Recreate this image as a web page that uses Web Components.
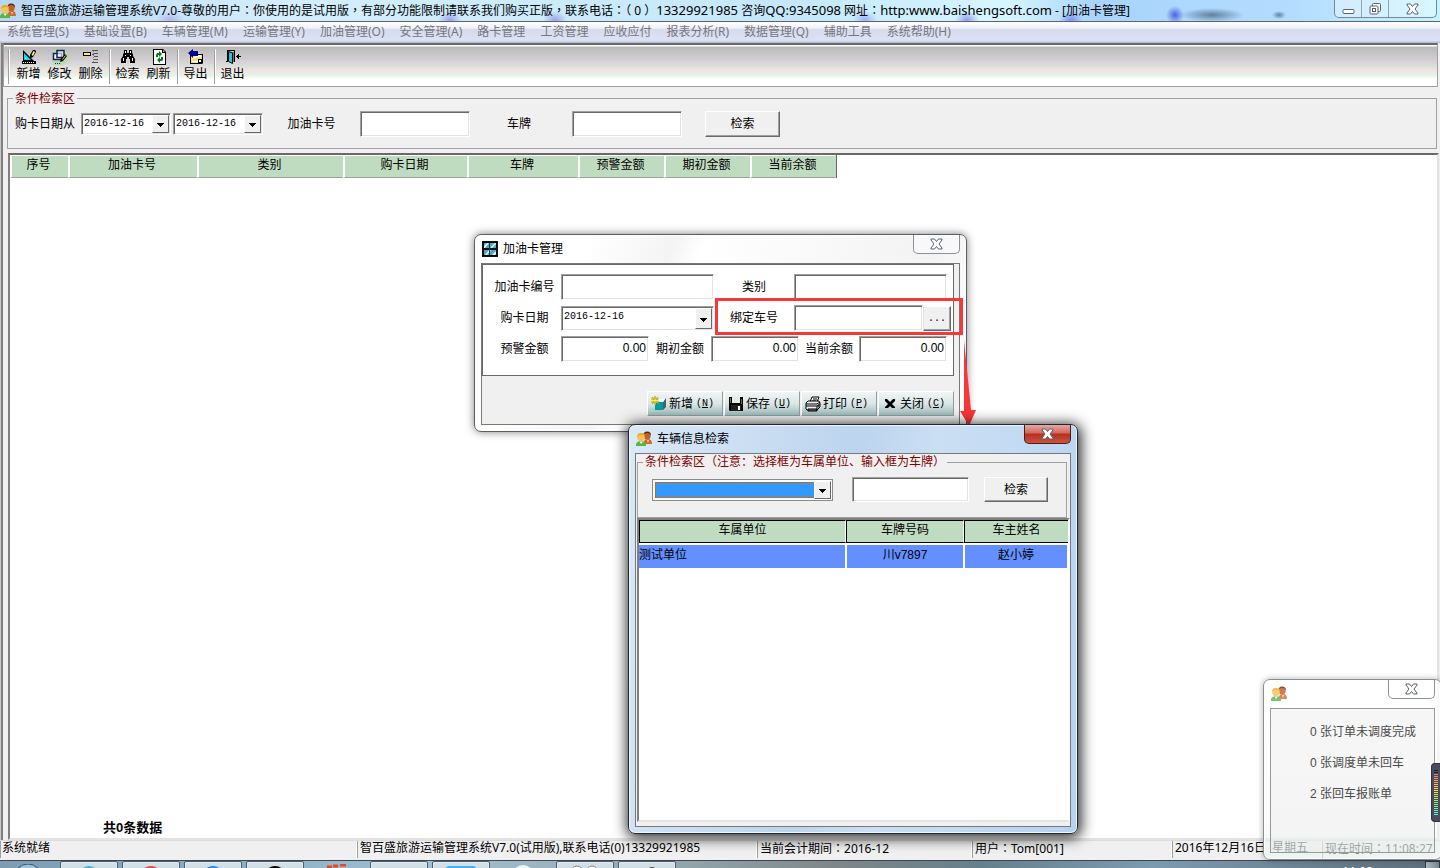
<!DOCTYPE html>
<html lang="zh-CN">
<head>
<meta charset="utf-8">
<title>智百盛旅游运输管理系统</title>
<style>
html,body{margin:0;height:100%;overflow:hidden;background:#fff}
</style>
</head>
<body>
<app-desktop></app-desktop>
<script>
const base = `
*,*::before,*::after{box-sizing:border-box}
:host{display:block;color:#000;font:12px/16px "Noto Sans","Noto Sans CJK SC",sans-serif}
:host([hidden]){display:none}
input,select,button{font:inherit;color:inherit;margin:0;border-radius:0;outline:0}
.mid{font-family:"Noto Sans CJK TC",sans-serif}
`;
/* full-width punctuation is set in the middle of its square */
const mid = text => text.replace(/[：，]/g, c => `<span class="mid" lang="zh-TW">${c}</span>`);

const controls = `
:host{font-family:"Liberation Sans","Noto Sans CJK SC",sans-serif}
input{height:26px;min-width:0;padding:0 2px;background:#fff;border:1px solid;border-color:#a0a0a0 #fff #fff #a0a0a0;
 box-shadow:inset 1px 1px #696969,inset -1px -1px #e3e3e3}
label{text-align:center;white-space:nowrap;flex:none}
.combo{position:relative;display:block;height:22px;flex:none}
.combo select{appearance:none;width:100%;height:100%;padding:0 2px;background:#fff;border:1px solid;border-color:#a0a0a0 #fff #fff #a0a0a0;
 box-shadow:inset 1px 1px #696969,inset -1px -1px #e3e3e3;font:10px/16px "Liberation Mono",monospace}
.combo svg{position:absolute;right:2px;top:2px;bottom:2px;width:17px;height:calc(100% - 4px);background:#f0f0f0;border:1px solid;
 border-color:#fff #696969 #696969 #fff;pointer-events:none}
.push{background:#f0f0f0;border:1px solid;border-color:#fff #696969 #696969 #fff;box-shadow:inset -1px -1px #a0a0a0;height:26px;padding:0;flex:none}
fieldset{border:1px solid #a0a0a0;margin:0;padding:0;min-width:0}
legend{color:#800000;padding:0 2px;margin-left:5px;line-height:16px}
.row{display:flex;align-items:center}
`;
const arrow = `<svg viewBox="0 0 15 16" shape-rendering="crispEdges" aria-hidden="true"><path d="M4 7h7v1h-1v1h-1v1h-1v1h-1v-1h-1v-1h-1v-1h-1z"/></svg>`;

function define(name, css, html){
  customElements.define(name, class extends HTMLElement{
    constructor(){
      super();
      this.attachShadow({mode:'open'}).innerHTML = `<style>${base}${css}</style>${html}`;
    }
  });
}

const icons = {
  users:`<g><circle cx="11" cy="5" r="3.6" fill="#c0602c"/><path d="M7.500 4q0-3.500 3.500-3.500 4.500 0 4 4.500-1-3-4-3-2 0-3.500 2z" fill="#5b2a14"/><path d="M8 12v-2q1-2 4-2 4 0 4 5H8z" fill="#d9652b"/><circle cx="5" cy="6.500" r="3.800" fill="#f6c350"/><path d="M1 6q0-4 4-4 4 0 4 3-2-1-4-1-3 0-4 2z" fill="#eba52a"/><path d="M0 15v-2q1-3 5-3 4 0 5 3v2z" fill="#55b64a"/><path d="M3.500 10.500 5 13l2-2.500z" fill="#fff"/><path d="M11 9h2l-1 3z" fill="#f5ddb0"/></g>`,
  add:`<path d="M2 1l11 11H2z" fill="#000"/><path d="M3 4l7 7H3z" fill="#00e0e8"/><path d="M4 8l2 2H4z" fill="#fff"/><path d="M1 12h14v3H1z"/><path d="M2 13h1v1H2zM4 13h1v1H4zM6 13h1v1H6zM8 13h1v1H8zM10 13h1v1h-1zM12 13h1v1h-1z" fill="#fff"/><path d="M9 9V6l3-5h2l1 1v1l-3 5-2 1z"/><path d="M10.500 6l2-4 1.500 1-2 4z" fill="#ffe98a"/>`,
  edit:`<path d="M0 3q2-3 7-3 5-1 8 3l1 6q-1 6-6 7H2q-3-4-2-13z" fill="#b5dcb0"/><path d="M1.500 4.500h8v6h-8z" fill="#fff" stroke="#181860" stroke-width="1.500"/><path d="M5 1.500h7v7H5z" fill="#fff" fill-opacity=".6" stroke="#181860" stroke-width="1.500"/><path d="M8 13l1-3 4-5 2 2-4 5z"/><path d="M10.500 10.500l3-4" stroke="#ffd54a"/><path d="M3 14.500h1m1 0h1m1 0h1" stroke="#333"/>`,
  del:`<path d="M0 3h8v4H0z"/><path d="M1 4h6v2H1z" fill="#ffe96a"/><path d="M9 1h6v1H9zM11 4h4v1h-4zM9 5h2v1H9zM11 7h4v1h-4zM11 10h4v1h-4zM9 13h6v1H9z" fill="#555"/><path d="M10.500 2v11" stroke="#888" stroke-dasharray="1 1"/>`,
  find:`<path d="M4 1h3v3h2V1h3v3l1 1v2l2 3v4h-5v-4H9V8H7v2H6v4H1v-4l2-3V5l1-1z"/><path d="M5 2h1v2H5zM10 2h1v2h-1zM3 9h1v3H3zM12 9h1v3h-1zM5 6h1v1H5zM10 6h1v1h-1z" fill="#fff"/>`,
  refresh:`<path d="M2 0h10l3 3v13H2z"/><path d="M3 1h8v3h3v11H3z" fill="#fff"/><path d="M12 1v2h2z" fill="#aaa"/><path d="M5 8V6l1-2h2V2l3 3-3 3V6H7v2zM12 8v3l-1 1H9v2l-3-3 3-3v2h1V8z" fill="#087a18"/>`,
  export:`<path d="M2 5h13v9l-1 1H2z"/><path d="M3 6h11v8H3z" fill="#f4e67d"/><path d="M4 8h4v1H4zM8 6h5v2H8zM4 12h6v1H4z" fill="#fff"/><path d="M10 10h4v4h-4z"/><path d="M11 11h2v2h-2z" fill="#fff"/><path d="M0 4l5-4v2h5v5H5v2z" fill="#00008c"/>`,
  exit:`<path d="M2 1h8v12H9V2H3v11H1v-1h1z"/><path d="M7 3h2v10H7z" fill="#777"/><path d="M3.500 2.500l4 1.500v10.500l-4-2z" fill="#27c9d4" stroke="#000"/><path d="M11 7h5v1h-5zM12 6h1v3h-1zM13 5h1v5h-1z"/>`,
  film:`<path d="M0 0h16v16H0z" fill="#111"/><path d="M2 2h12v5H2zM2 9h12v5H2z" fill="#55a6c0"/><path d="M2 5l3-3h2L3 7H2zM9 6l4-4h1v1l-4 4H9zM3 14l4-5h2l-4 5zM10 14l4-4v3l-1 1z" fill="#dff5ff"/><path d="M0 1h16v1H0zM0 14h16v1H0z"/><path d="M7 2h1v12H7z" fill="#18384a"/>`,
  spark:`<path d="M4 6h8v8H4z" fill="#009c9c"/><path d="M12 6l3-4v9l-3 3z" fill="#426070"/><path d="M6 5l2-2h6l-2 3z" fill="#fff"/><path d="M4 0v9M0 4.500h8M1 1.500l6 6M7 1.500l-6 6" stroke="#857c00" stroke-width="1.600"/><path d="M4 0v9M0 4.500h8M1 1.500l6 6M7 1.500l-6 6" stroke="#fff04a"/>`,
  save:`<path d="M1 1h14v14H2l-1-1z"/><path d="M4 1h8v6H4z" fill="#e3eaea"/><path d="M3 9h10v6H3z" fill="#202020"/><path d="M2 2h1v5H2zM13 3h1v5h-1z" fill="#777728"/><path d="M10 10h2v4h-2z" fill="#fff"/>`,
  print:`<path d="M5 6l2-5h7l-2 5z" fill="#fff" stroke="#000"/><path d="M8 3h4M7 5h4" stroke="#000"/><path d="M1 7l2-2h11l1 2v4l-3 3H2l-1-1z" fill="#eee" stroke="#000"/><path d="M1 8h11l3-2M1 10h11v4M12 10l3-2M3 13h9v2H3z" fill="none" stroke="#000"/><path d="M13 9v3l2-2V7z" fill="#333"/>`,
  cross:`<path d="M3 3h2l3 3 3-3h2v2l-3 3 3 3v1h-3L8 10l-2 2H3v-1l3-3-3-3z"/>`
};
customElements.define('pixel-icon', class extends HTMLElement{
  constructor(){
    super();
    this.attachShadow({mode:'open'}).innerHTML =
      `<style>:host{display:block;width:16px;height:16px;flex:none}svg{display:block}</style>
       <svg width="16" height="16" viewBox="0 0 16 16" aria-hidden="true">${icons[this.getAttribute('name')]||''}</svg>`;
  }
});

const xGlyph = `<svg width="13" height="12" viewBox="0 0 13 12" aria-hidden="true"><path d="M1 1h3.500l2 2.500 2-2.500H12v1L9 6l3 4v1H8.500l-2-2.500-2 2.500H1v-1l3-4-3-4z" fill="#fff" stroke="#596070"/></svg>`;

define('title-bar', `
:host{height:22px;border-bottom:1px solid #596470;overflow:hidden;
 background:
  radial-gradient(ellipse 14px 9px at 70px 20px,#c0c6ee,transparent),
  radial-gradient(ellipse 14px 9px at 170px 20px,#b0b8ee,transparent),
  radial-gradient(ellipse 12px 9px at 450px 20px,#9aa2ee,transparent),
  radial-gradient(ellipse 12px 9px at 555px 20px,#9aa2ee,transparent),
  radial-gradient(ellipse 12px 9px at 865px 20px,#9fb0f5,transparent),
  radial-gradient(ellipse 12px 9px at 967px 20px,#8f9cf0,transparent),
  radial-gradient(ellipse 12px 9px at 1071px 20px,#7d90f0,transparent),
  radial-gradient(ellipse 9px 9px at 1175px 15px,#4c63e0,transparent),
  radial-gradient(ellipse 32px 7px at 1212px 15px,#60809c,transparent),
  radial-gradient(ellipse 7px 4px at 1279px 15px,#60809c,transparent),
  linear-gradient(90deg,#b9d6f0,#d4eefc 20%,#c4e8fa 55%,#d6f6ff 70%,#a8d4fb 76%,#b4dcff 90%,#c6f4ff)}
.bar{display:flex;justify-content:space-between}
.name{display:flex;align-items:center;gap:5px;height:21px;white-space:nowrap}
h1{margin:0;font:inherit}
.num{font-size:13px}
.btns{display:flex;height:18px;margin-right:3px;border:1px solid #74899c;border-top:0;border-radius:0 0 5px 5px;overflow:hidden;background:rgba(255,255,255,.35)}
button{display:grid;place-items:center;width:27px;border:0;border-right:1px solid #8fa5b5;background:none;padding:0}
button:last-child{width:47px;border:0}
`, `<div class="bar"><div class="name"><pixel-icon name="users"></pixel-icon><h1>${mid('智百盛旅游运输管理系统V7.0-尊敬的用户：你使用的是试用版，有部分功能限制请联系我们购买正版，联系电话：')}（ 0 ）<span class="num">13329921985</span> 咨询<span class="num">QQ:9345098</span> ${mid('网址：')}<span class="num">http:www.baishengsoft.com</span> - [加油卡管理]</h1></div>
<div class="btns"><button aria-label="最小化"><svg width="13" height="12" viewBox="0 0 13 12"><rect x="1" y="6.500" width="11" height="4" rx="1" fill="#fff" stroke="#596070"/></svg></button><button aria-label="还原"><svg width="13" height="12" viewBox="0 0 13 12" fill="#fff" stroke="#596070"><rect x="3.500" y=".5" width="8" height="8" rx="1"/><rect x="1" y="3" width="8" height="8" rx="1"/><rect x="3.500" y="5.500" width="3" height="3"/></svg></button><button aria-label="关闭">${xGlyph}</button></div></div>`);

define('menu-bar', `
:host{height:21px;background:linear-gradient(#fff,#eef0f8 30%,#d5dcee 35%,#dde2f4 90%,#b8c0d4 96%)}
nav{display:flex;gap:15px;padding:2px 7px 0;white-space:nowrap}
a{color:#76767c;text-decoration:none}
`, `<nav>${['系统管理(S)','基础设置(B)','车辆管理(M)','运输管理(Y)','加油管理(O)','安全管理(A)','路卡管理','工资管理','应收应付','报表分析(R)','数据管理(Q)','辅助工具','系统帮助(H)'].map(t=>`<a href="#">${t}</a>`).join('')}</nav>`);

define('tool-button', `
:host{width:31px;font-family:"Noto Sans CJK SC",sans-serif}
button{display:flex;flex-direction:column;align-items:center;width:100%;padding:0;border:0;background:none;white-space:nowrap}
`, `<button><slot name="icon"></slot><slot></slot></button>`);

define('tool-bar', `
:host{height:44px;margin-right:1px;border:1px solid #a0a0a0;border-top:2px solid #696969;
 background:linear-gradient(#fff 0 1px,#bababa 2px,#c8c8c8 10px,#d4ccd4 15px,#d8dcd8 20px,#eee4e4 25px,#e8f4e8 31px,#fff 34px)}
div{display:flex;height:100%;padding:4px 4px 2px}
i{width:6px;padding-right:1px}
i::before{content:"";display:block;height:100%;margin-right:1px;border-right:1px solid #a0a0a0;box-shadow:1px 0 #fff}
i:first-child{width:3px;margin-right:2px}
`, `<div role="toolbar"><i></i>${[['add','新增'],['edit','修改'],['del','删除'],0,['find','检索'],['refresh','刷新'],0,['export','导出'],0,['exit','退出']].map(b=>b?`<tool-button><pixel-icon slot="icon" name="${b[0]}"></pixel-icon>${b[1]}</tool-button>`:'<i></i>').join('')}</div>`);

define('card-search', controls+`
:host{padding:2px 2px 4px 4px;background:#f0f0f0}
legend{padding-top:2px}
.row{height:47px;padding:0 7px 2px;margin-top:-6px}
.row label:first-child{width:66px;text-align:left}
.combo{width:90px;margin-right:2px}
.combo+.combo{margin-right:0}
.wide{width:97px}.plate{width:102px;padding-right:4px}
input{width:110px}
.push{width:75px;margin-left:23px}
`, `<fieldset><legend>条件检索区</legend><div class="row">
<label for="from">购卡日期从</label><span class="combo"><select id="from"><option>2016-12-16</option></select>${arrow}</span><span class="combo"><select aria-label="购卡日期到"><option>2016-12-16</option></select>${arrow}</span>
<label class="wide" for="card">加油卡号</label><input id="card"><label class="plate" for="plate">车牌</label><input id="plate"><button class="push">检索</button></div></fieldset>`);

define('card-table', `
:host{flex:1;min-height:0;margin-left:5px;border:2px solid;border-color:#696969 #e3e3e3 #e3e3e3 #808080;background:#fff;font-family:"Liberation Sans","Noto Sans CJK SC",sans-serif}
.in{display:flex;flex-direction:column;justify-content:space-between;height:100%}
table{border-collapse:separate;border-spacing:0;table-layout:fixed;width:827px;border-right:1px solid #696969}
th{height:23px;padding:0 2px 4px 0;font-weight:400;background:#c0dcc0;border:1px solid;border-color:#fff #c0dcc0 #a0a0a0 #fff;border-left-width:2px}
p{margin:0;padding:0 0 2px 93px;font-size:13px;font-weight:700}
`, `<div class="in"><table><colgroup><col style="width:58px"><col style="width:129px"><col style="width:146px"><col style="width:124px"><col style="width:111px"><col style="width:86px"><col style="width:86px"><col style="width:86px"></colgroup><thead><tr>${['序号','加油卡号','类别','购卡日期','车牌','预警金额','期初金额','当前余额'].map(t=>`<th scope="col">${t}</th>`).join('')}</tr></thead></table><p>共0条数据</p></div>`);

define('status-bar', `
:host{height:20px;background:#f0f0f0;border-top:1px solid #dcdcdc}
div{display:grid;grid-template-columns:357fr 400fr 215fr 200fr 150fr 118fr;height:17px}
span{line-height:14px}
div>span{border-left:1px solid #a0a0a0;padding-left:2px;white-space:nowrap;min-width:0;box-shadow:-1px 0 #fff}
div>span:first-child{padding-left:1px}
`, `<div><span>系统就绪</span><span>智百盛旅游运输管理系统V7.0(试用版),联系电话(0)13329921985</span><span>${mid('当前会计期间：')}2016-12</span><span>${mid('用户：')}Tom[001]</span><span>2016年12月16日&ensp;星期五</span><span>${mid('现在时间：')}11:08:27</span></div>`);

define('task-bar', `
:host{height:8px;overflow:hidden;border-top:1px solid #3d4650;background:linear-gradient(90deg,#7d9cb2,#8fb3c8 20%,#a4c0d0 30%,#90a4aa 48%,#7e8688 58%,#65808c 68%,#7c9ab0 80%,#5c6e7a)}
div{display:flex;height:30px;gap:4px}
i{flex:none;width:58px;border:1px solid #4a6070;border-radius:2px;background:linear-gradient(#d6e2e8,#b4c8d4);box-shadow:inset 0 0 0 1px #dfeaf0}
i svg{display:block;margin:3px auto 0}
i.orb{width:56px;background:none;border:0;box-shadow:none}
i.flat{background:none;border:0;box-shadow:none}
time{margin:3px 48px 0 auto;color:#fff;line-height:16px}
b{width:15px;border:1px solid #2f3c46;background:linear-gradient(90deg,#b0bcc4,#77868f)}
`, `<div><i class="orb"><svg width="34" height="26"><circle cx="17" cy="14" r="14" fill="#a5c0cf" stroke="#235d88"/></svg></i>${['#45b8e0','#dc4a3a','#1c8cf0','#000'].map(c=>`<i><svg width="24" height="20"><circle cx="12" cy="12" r="11" fill="${c}"/></svg></i>`).join('')}<i class="flat"><svg width="24" height="20"><path d="M2 3h5m1-1h5m2-1h6" stroke="#e84a1c" stroke-width="3"/></svg></i><i><svg width="20" height="20"><path d="M2 4h14v12H2z" fill="#c8a970"/></svg></i><i><svg width="32" height="20"><rect x="1" y="1" width="30" height="19" rx="3" fill="#3cb4f4"/></svg></i><i class="flat"><svg width="24" height="20"><circle cx="12" cy="12" r="11" fill="#e9f6fc"/></svg></i><i><svg width="32" height="20" fill="#fff" stroke="#888"><circle cx="8" cy="7" r="6"/><circle cx="23" cy="7" r="6"/></svg></i><i><svg width="24" height="20"><circle cx="17" cy="8" r="6" fill="#555"/></svg></i><time>11:08</time><b></b></div>`);

define('glass-window', `
:host{position:absolute;display:flex;flex-direction:column;padding:0 6px 6px;border:1px solid #555d66;border-radius:7px;
 background:linear-gradient(115deg,#fff 0 20%,#f4f4f4 35%,#fff 40%,#f3f3f3 80%,#fff);box-shadow:inset 0 0 0 1px #fff,0 0 9px rgba(0,0,0,.5)}
:host([tone=blue]){border-color:#20262e;background:linear-gradient(100deg,#dbe9f7,#bcd4ee 45%,#cbdff3 60%,#b4d2f2);box-shadow:inset 0 0 0 1px #eef8ff,1px 2px 14px 2px rgba(0,0,0,.85)}
:host([tone=ghost]){border-color:#8a8e92;background:linear-gradient(rgba(255,255,255,.85),rgba(248,248,248,.5) 80%,rgba(230,250,245,.5));box-shadow:inset 0 0 0 1px #fff,0 0 6px rgba(0,0,0,.3)}
header{display:flex;justify-content:space-between;height:28px;flex:none}
.name{display:flex;align-items:center;gap:5px;padding-left:1px;white-space:nowrap}
:host([tone=ghost]) .name{opacity:.8}
h2{margin:0;font:inherit}
button{display:grid;place-items:center;width:47px;height:19px;padding:0;border:1px solid #8b9199;border-top:0;border-radius:0 0 5px 5px;background:rgba(255,255,255,.4)}
:host([tone=blue]) button{border-color:#4d1b18;background:linear-gradient(#e6a79e,#d0685a 45%,#b52f20 50%,#c9543e)}
main{flex:1;min-height:0;border:1px solid #787878;background:#f0f0f0}
:host([tone=ghost]) main{border-color:#999;background:rgba(232,232,232,.35)}
`, `<header><div class="name"><slot name="icon"></slot><h2><slot name="title"></slot></h2></div><button aria-label="关闭">${xGlyph}</button></header><main><slot></slot></main>`);

define('card-form', controls+`
:host{height:100%}
form{display:flex;flex-direction:column;justify-content:space-between;height:100%;padding-bottom:8px}
.panel{height:112px;margin-right:5px;padding:9px 0 0 5px;background:#fff;border:1px solid #696969}
.row{height:26px;margin-bottom:5px}
.row label:first-child{width:73px}
.l1{width:80px}.l2{width:62px}.l3{width:60px}
.w{width:153px}.n{width:88px;text-align:right;padding-bottom:3px}
.combo{height:25px}.combo select{padding-bottom:3px}
.pick{width:129px}
.dots{width:28px;height:25px;font:10px/16px "Liberation Mono",monospace;border-left-color:#e3e3e3;padding-top:2px}
.acts{display:flex;justify-content:flex-end;gap:1px;padding-right:5px}
.acts button{display:flex;align-items:center;justify-content:space-between;width:76px;height:25px;padding:0 8px 0 3px;white-space:nowrap;border:1px solid;border-color:#fff #8f9f9f #8f9f9f #fff;background:linear-gradient(#f1f5f5,#dbe6e6 50%,#9fbdbd)}
.acts span{display:flex;align-items:center;gap:3px}
.acts small{font:10px/12px "Liberation Mono",monospace}
`, `<form><div class="panel">
<div class="row"><label for="no">加油卡编号</label><input class="w" id="no"><label class="l1" for="kind">类别</label><input class="w" id="kind"></div>
<div class="row"><label for="date">购卡日期</label><span class="combo w"><select id="date"><option>2016-12-16</option></select>${arrow}</span><label class="l1" for="car">绑定车号</label><input class="pick" id="car"><button type="button" class="push dots" aria-label="选择车号">...</button></div>
<div class="row"><label for="warn">预警金额</label><input class="n" id="warn" value="0.00"><label class="l2" for="init">期初金额</label><input class="n" id="init" value="0.00"><label class="l3" for="bal">当前余额</label><input class="n" id="bal" value="0.00"></div>
</div><div class="acts">${[['spark','新增','N'],['save','保存','U'],['print','打印','P'],['cross','关闭','C']].map(b=>`<button type="button"><pixel-icon name="${b[0]}"></pixel-icon><span>${b[1]}<small>(<u>${b[2]}</u>)</small></span></button>`).join('')}</div></form>`);

define('vehicle-search', controls+`
:host{display:flex;flex-direction:column;height:100%;padding:0 0 4px 1px}
fieldset{margin-right:3px;flex:none}
.row{height:46px;padding:0 14px 9px;margin-top:1px}
.combo{width:181px}
.combo select{background:#3399ff;border:3px solid #fff;box-shadow:inset 0 0 0 1px #c06a18;outline:1px solid #8a8a8a;outline-offset:-1px}
input{width:117px;height:25px;margin:0 15px 0 19px}
.push{width:64px;height:25px}
.grid{flex:1;border:2px solid;border-color:#808080 #fff #e3e3e3 #808080;background:#fff;overflow:hidden}
table{width:100%;table-layout:fixed;border-collapse:separate;border-spacing:0}
th,td{padding:0 0 4px;font-weight:400;text-align:center}
th{height:23px;background:#c0dcc0;border:1px solid #000;border-right:0}
th:not(:last-child){border-right:1px solid #fff}
td{height:26px;background:#6490ff;border:2px solid #fff;border-width:2px 1px 1px}
td:first-child{text-align:left;border-left:0}
`, `<fieldset><legend>条件检索区（注意：选择框为车属单位、输入框为车牌）</legend><div class="row"><span class="combo"><select aria-label="车属单位"><option></option></select>${arrow}</span><input aria-label="车牌"><button class="push">检索</button></div></fieldset>
<div class="grid"><table><colgroup><col style="width:207px"><col style="width:118px"><col></colgroup><thead><tr><th scope="col">车属单位</th><th scope="col">车牌号码</th><th scope="col">车主姓名</th></tr></thead><tbody><tr><td>测试单位</td><td>川v7897</td><td>赵小婷</td></tr></tbody></table></div>`);

define('notice-list', `
:host{font-family:"Liberation Sans","Noto Sans CJK SC",sans-serif;color:#4a4a4a}
ul{margin:0;padding:15px 0 0 39px;list-style:none;display:grid;gap:15px}
`, `<ul><li>0 张订单未调度完成</li><li>0 张调度单未回车</li><li>2 张回车报账单</li></ul>`);

define('level-meter', `
:host{position:absolute;right:0;top:763px;width:9px;height:59px;padding:6px 2px 6px 2px;border:1px solid #303440;border-right:0;border-radius:4px 0 0 4px;background:#4a4c5c}
div{height:100%;background:repeating-linear-gradient(transparent 0 1px,#4a4c5c 1px 2px),linear-gradient(#20222c 0 3px,#ff705c 4px,#ffac4c 12px,#ffe848 20px,#90f068 32px,#48ffdc)}
`, `<div></div>`);

define('app-desktop', `
:host{position:relative;display:flex;flex-direction:column;height:100vh;overflow:hidden;background:#f0f0f0}
.work{flex:1;min-height:0;display:flex;flex-direction:column;padding:0 1px 0 2px;border-left:1px solid #c8c8c8;background:linear-gradient(90deg,#808080 0 2px,#f0f0f0 2px)}
.fuel{left:474px;top:234px;width:493px;height:198px}
.car{left:628px;top:424px;width:450px;height:410px}
.note{right:-2px;bottom:8px;width:179px;height:181px}
.mark{position:absolute;left:715px;top:298px;width:248px;height:37px;border:3px solid #fb3637}
.arrow{position:absolute;left:958px;top:338px}
`, `<title-bar></title-bar><menu-bar></menu-bar><div class="work"><tool-bar></tool-bar><card-search></card-search><card-table></card-table></div><status-bar></status-bar><task-bar></task-bar>
<glass-window class="fuel"><pixel-icon slot="icon" name="film"></pixel-icon><span slot="title">加油卡管理</span><card-form></card-form></glass-window>
<div class="mark"></div><svg class="arrow" width="20" height="90" aria-hidden="true"><path d="M6 2l7 70h5L11 88 2 73h4z" fill="#fb3637"/></svg>
<glass-window class="car" tone="blue"><pixel-icon slot="icon" name="users"></pixel-icon><span slot="title">车辆信息检索</span><vehicle-search></vehicle-search></glass-window>
<glass-window class="note" tone="ghost"><pixel-icon slot="icon" name="users"></pixel-icon><notice-list></notice-list></glass-window>
<level-meter></level-meter>`);
</script>
</body>
</html>
